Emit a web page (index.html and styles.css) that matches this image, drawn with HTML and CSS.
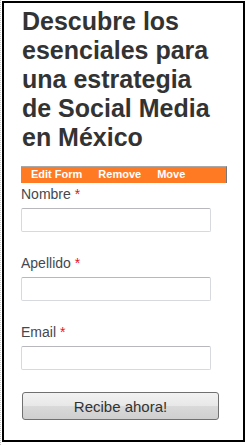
FILE: index.html
```html
<!DOCTYPE html>
<html lang="es">
<head>
  <meta charset="UTF-8" />
  <meta name="viewport" content="width=device-width, initial-scale=1.0"/>
  <title>Descubre los esenciales</title>
  <link rel="stylesheet" href="styles.css">
</head>
<body>
  <div class="page">
    <div class="box">
      <h1>Descubre los esenciales para una estrategia de Social Media en México</h1>

      <div class="edit-bar">
        <a href="#">Edit Form</a>
        <a href="#">Remove</a>
        <a href="#">Move</a>
      </div>

      <form class="form">
        <div class="field">
          <label for="nombre">Nombre <span class="req">*</span></label>
          <input type="text" id="nombre">
        </div>
        <div class="field">
          <label for="apellido">Apellido <span class="req">*</span></label>
          <input type="text" id="apellido">
        </div>
        <div class="field">
          <label for="email">Email <span class="req">*</span></label>
          <input type="email" id="email">
        </div>
        <button type="submit" class="submit">Recibe ahora!</button>
      </form>
    </div>
  </div>
</body>
</html>
```

FILE: styles.css
```css
* {
  margin: 0;
  padding: 0;
  box-sizing: border-box;
}

body {
  font-family: 'Liberation Sans', Arial, Helvetica, sans-serif;
  background: #fff;
  color: #333;
}

.page {
  border-left: 1px dotted #c4c4c4;
  padding: 1px 0 0 1px;
  width: 247px;
  height: 445px;
}

.box {
  width: 243px;
  height: 441px;
  border: 2px solid #000;
  padding: 4px 0 0 17px;
}

h1 {
  width: 198px;
  font-size: 25px;
  line-height: 29px;
  font-weight: bold;
  color: #333;
  padding-left: 1px;
}

.edit-bar {
  margin-top: 14px;
  width: 206px;
  height: 17px;
  background: #ff7a22;
  border-top: 1px solid #a8a8a8;
  border-right: 1px solid #777;
  padding-left: 10px;
  display: flex;
  gap: 16px;
  line-height: 15px;
}

.edit-bar a {
  color: #fff;
  font-size: 11px;
  font-weight: bold;
  text-decoration: none;
}

.form {
  padding-top: 3px;
}

.field {
  margin-bottom: 23px;
}

.field label {
  display: block;
  font-size: 14px;
  line-height: 16px;
  color: #434850;
  margin-bottom: 6px;
}

.req {
  color: #e8141e;
}

.field input {
  display: block;
  width: 190px;
  height: 24px;
  border: 1px solid #d6d9de;
  border-top-color: #b8b8bc;
  border-radius: 2px;
  background: #fff;
}

.submit {
  display: block;
  margin: -1px 0 0 1px;
  width: 197px;
  height: 28px;
  border: 1px solid #707070;
  border-radius: 3px;
  background: linear-gradient(#f2f2f2 0%, #e8e8e8 48%, #d9d9d9 52%, #cfcfcf 100%);
  font-family: 'Liberation Sans', Arial, sans-serif;
  font-size: 15px;
  color: #333;
}
```
